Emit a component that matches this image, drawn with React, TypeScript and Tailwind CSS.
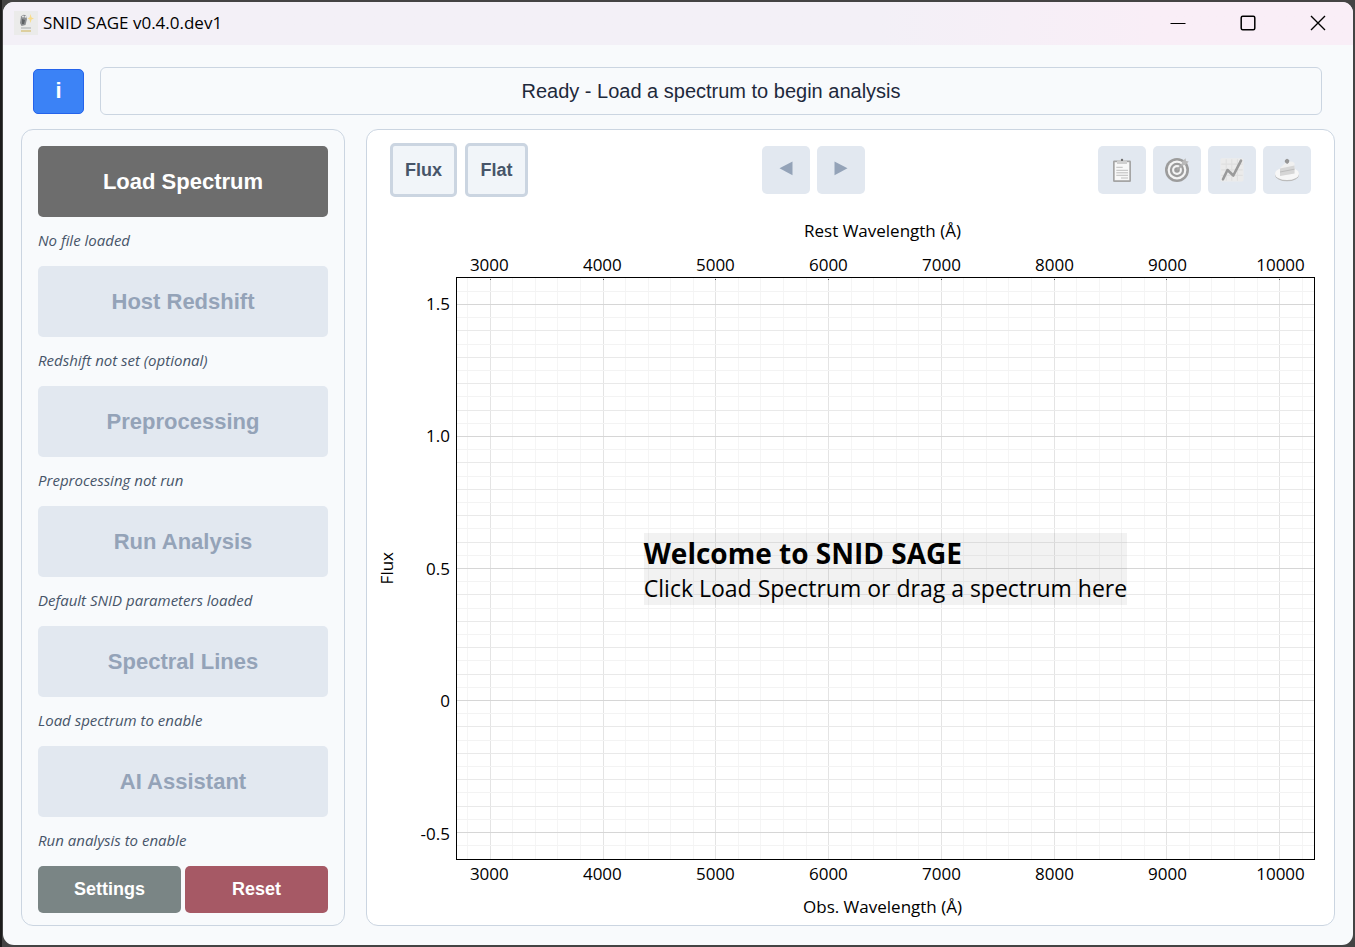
import React from "react";

const steps = [
  { label: "Load Spectrum", note: "No file loaded", enabled: true },
  { label: "Host Redshift", note: "Redshift not set (optional)", enabled: false },
  { label: "Preprocessing", note: "Preprocessing not run", enabled: false },
  { label: "Run Analysis", note: "Default SNID parameters loaded", enabled: false },
  { label: "Spectral Lines", note: "Load spectrum to enable", enabled: false },
  { label: "AI Assistant", note: "Run analysis to enable", enabled: false },
];

const X_MIN = 2705;
const X_MAX = 10305;
const Y_MIN = -0.6;
const Y_MAX = 1.6;

const xTicks = [3000, 4000, 5000, 6000, 7000, 8000, 9000, 10000];
const yTicks = [
  { value: 1.5, label: "1.5" },
  { value: 1, label: "1.0" },
  { value: 0.5, label: "0.5" },
  { value: 0, label: "0" },
  { value: -0.5, label: "-0.5" },
];

const xPct = (v: number) => `${((v - X_MIN) / (X_MAX - X_MIN)) * 100}%`;
const yPct = (v: number) => `${((Y_MAX - v) / (Y_MAX - Y_MIN)) * 100}%`;

const xLines = Array.from({ length: 38 }, (_, i) => 2800 + i * 200);
// Horizontal grid positions in hundredths, one every 0.05
const yLines = Array.from({ length: 43 }, (_, i) => -55 + i * 5);

function yStroke(v: number) {
  if (v % 50 === 0) return "#d6d6d6";
  if (v % 10 === 0) return "#e9e9e9";
  return "#f3f3f3";
}

function AppIcon() {
  return (
    <svg width="24" height="24" viewBox="0 0 24 24" aria-hidden="true">
      <rect width="24" height="24" fill="#ebebea" />
      <path d="M7 5.5Q9 2.5 12 4.5L13 8L11.5 14L7.5 15L6 12Z" fill="#8c8f92" />
      <path d="M8 8L11 9L10 13L8 13Z" fill="#5f6265" />
      <circle cx="9" cy="5.5" r="1" fill="#e8e8e8" />
      <circle cx="11.5" cy="5.7" r="1" fill="#e8e8e8" />
      <path d="M16.5 3L17.5 6.5L20 7.5L17.5 8.5L16.5 12L15.5 8.5L13.5 7.5L15.5 6.5Z" fill="#f8dc8c" />
      <path d="M7 16H17V18H7Z" fill="#c9cbcc" />
      <path d="M7 19H17V21H7Z" fill="#ddcf9f" />
    </svg>
  );
}

function ClipboardIcon() {
  return (
    <svg width="24" height="24" viewBox="0 0 24 24" aria-hidden="true">
      <rect x="3" y="2.5" width="18" height="21.5" rx="1.2" fill="#a5a5a5" />
      <rect x="4.7" y="4.2" width="14.6" height="18" fill="#f8f8f8" />
      <path d="M7 6V3.2Q7 2.4 8 2.4H10.3L12 .6L13.7 2.4H16Q17 2.4 17 3.2V6Z" fill="#cfcfcf" />
      <circle cx="12" cy="1.9" r="1.2" fill="#6f6f6f" />
      <path d="M6.3 9.3H12.7M6.3 12.3H18M6.3 14.8H18M6.3 17.3H18M11 20H18" stroke="#bdbdbd" strokeWidth="1" />
    </svg>
  );
}

function TargetIcon() {
  return (
    <svg width="24" height="24" viewBox="0 0 24 24" aria-hidden="true">
      <circle cx="12" cy="12" r="12" fill="#9c9c9c" />
      <circle cx="12" cy="12" r="9.4" fill="#f4f4f4" />
      <circle cx="12" cy="12" r="7.2" fill="#9c9c9c" />
      <circle cx="12" cy="12" r="4.9" fill="#f4f4f4" />
      <circle cx="12" cy="12" r="2.8" fill="#9c9c9c" />
      <path d="M12 12L19 5" stroke="#a9a9a9" strokeWidth="1.8" />
      <path d="M16.5 7.5L17 3.8L20.6 .2L21 3L23.8 3.4L20.2 7Z" fill="#b9b9b9" />
    </svg>
  );
}

function ChartIcon() {
  return (
    <svg width="24" height="24" viewBox="0 0 24 24" aria-hidden="true">
      <rect x="0.3" y="0.3" width="23.2" height="23.2" rx="1.5" fill="#ebebeb" />
      <path d="M1.2 6.2H22.7M1.2 11.8H22.7M1.2 17.4H22.7M6.2 1.2V22.7M11.8 1.2V22.7M17.4 1.2V22.7" stroke="#e0e0e0" strokeWidth="1.2" />
      <path d="M3 21.3L7.5 12L13.3 17.5L21 2.7" fill="none" stroke="#9a9a9a" strokeWidth="2.6" strokeLinecap="round" strokeLinejoin="round" />
    </svg>
  );
}

function CakeIcon() {
  return (
    <svg width="24" height="24" viewBox="0 0 24 24" aria-hidden="true">
      <ellipse cx="12" cy="16.8" rx="12" ry="6.5" fill="#bcbcbc" />
      <ellipse cx="12" cy="15.8" rx="12" ry="6.3" fill="#f7f7f7" />
      <path d="M5 10L11 4.5Q16 2.5 19.5 5V15.5L5 18Z" fill="#f0f0f0" />
      <path d="M5 10.5L19.5 7.5V15.5L5 18Z" fill="#d6d6d6" />
      <path d="M5 14L19.5 11.2" stroke="#bdbdbd" strokeWidth="1" />
      <path d="M10 2.2Q12 -.8 14.2 2.2Q14.8 4.6 12.2 6Q9.2 4.8 10 2.2Z" fill="#969696" />
    </svg>
  );
}

const tools = [
  { name: "Show results", Icon: ClipboardIcon },
  { name: "Best match", Icon: TargetIcon },
  { name: "Show plots", Icon: ChartIcon },
  { name: "Composition", Icon: CakeIcon },
];

const toolButton =
  "flex h-12 w-12 items-center justify-center rounded-[5px] bg-[#e2e8f0] text-[#94a3b8]";

function XTickRow() {
  return (
    <div className="relative mr-[19px] ml-[89px] h-6 text-[17px] leading-6">
      {xTicks.map((t) => (
        <span key={t} className="absolute -translate-x-1/2" style={{ left: xPct(t) }}>
          {t}
        </span>
      ))}
    </div>
  );
}

function TitleBar() {
  return (
    <header className="flex h-[43px] items-center bg-linear-to-r from-[#f3f0f7] from-65% to-[#f9eef7] to-85% pb-[2px] pl-[11px]">
      <AppIcon />
      <h1 className="ml-[5px] grow text-[17px] leading-6 text-black">SNID SAGE v0.4.0.dev1</h1>
      <button aria-label="Minimize" className="flex h-full w-[70px] items-center justify-center">
        <svg width="16" height="16" viewBox="0 0 16 16">
          <path d="M0.5 8.5H15.5" stroke="#000" />
        </svg>
      </button>
      <button aria-label="Maximize" className="flex h-full w-[70px] items-center justify-center">
        <svg width="16" height="16" viewBox="0 0 16 16">
          <rect x="1.2" y="1.2" width="13.6" height="13.6" rx="1.5" fill="none" stroke="#000" strokeWidth="1.5" />
        </svg>
      </button>
      <button aria-label="Close" className="flex h-full w-[70px] items-center justify-center">
        <svg width="16" height="16" viewBox="0 0 16 16">
          <path d="M1 1L15 15M15 1L1 15" stroke="#000" strokeWidth="1.4" />
        </svg>
      </button>
    </header>
  );
}

function Sidebar() {
  return (
    <aside className="flex w-[324px] shrink-0 flex-col rounded-[12px] border border-[#cbd5e1] px-4 pb-3 pt-4">
      {steps.map((s) => (
        <div key={s.label}>
          <button
            disabled={!s.enabled}
            className={
              s.enabled
                ? "block h-[71px] w-full rounded-[5px] bg-[#6d6d6d] font-['Liberation_Sans',sans-serif] text-[22px] font-bold text-white"
                : "block h-[71px] w-full rounded-[5px] bg-[#e2e8f0] font-['Liberation_Sans',sans-serif] text-[22px] font-bold text-[#94a3b8]"
            }
          >
            {s.label}
          </button>
          <p className="h-[49px] pt-[13px] text-[15px] leading-5 text-[#475569] italic">{s.note}</p>
        </div>
      ))}
      <div className="flex gap-1 font-['Liberation_Sans',sans-serif] text-[18px] font-bold text-white">
        <button className="h-[47px] flex-1 rounded-[5px] bg-[#7a8585]">Settings</button>
        <button className="h-[47px] flex-1 rounded-[5px] bg-[#a65965]">Reset</button>
      </div>
    </aside>
  );
}

function Plot() {
  return (
    <>
      <div className="mt-[22px] h-6 pr-5 pl-[84px] text-center text-[17px] leading-6">Rest Wavelength (Å)</div>
      <div className="h-[10px]" />
      <XTickRow />
      <div className="flex grow pr-[19px]">
        <div className="relative w-[89px] shrink-0">
          <div className="absolute inset-y-0 left-2 flex w-6 items-center justify-center text-[17px] leading-6">
            <span className="rotate-180 [writing-mode:vertical-rl]">Flux</span>
          </div>
          {yTicks.map((t) => (
            <span
              key={t.label}
              className="absolute right-[6px] -translate-y-1/2 text-[17px] leading-6"
              style={{ top: yPct(t.value) }}
            >
              {t.label}
            </span>
          ))}
        </div>
        <div className="relative grow border border-black">
          <svg className="absolute inset-0 h-full w-full" shapeRendering="crispEdges" aria-hidden="true">
            {xLines.map((v) => (
              <line key={v} x1={xPct(v)} x2={xPct(v)} y1="0" y2="100%" stroke={v % 1000 === 0 ? "#e4e4e4" : "#f5f5f5"} />
            ))}
            {yLines.map((v) => (
              <line key={v} x1="0" x2="100%" y1={yPct(v / 100)} y2={yPct(v / 100)} stroke={yStroke(v)} />
            ))}
            {xTicks.map((v) => (
              <line key={v} x1={xPct(v)} x2={xPct(v)} y1="1" y2="2" stroke="#555" />
            ))}
          </svg>
          <div className="absolute inset-0 flex items-center justify-center">
            <div className="bg-black/5 pt-[2px] whitespace-nowrap text-black">
              <h2 className="text-[28px] leading-9 font-bold">Welcome to SNID SAGE</h2>
              <p className="text-[23px] leading-[34px]">Click Load Spectrum or drag a spectrum here</p>
            </div>
          </div>
        </div>
      </div>
      <div className="h-[2px]" />
      <XTickRow />
      <div className="mt-[9px] h-6 pr-5 pl-[84px] text-center text-[17px] leading-6">Obs. Wavelength (Å)</div>
    </>
  );
}

export default function App() {
  return (
    <div className="flex min-h-screen flex-col border-l-2 border-[#1c1c1c] bg-[#444444] pt-[2px] pr-[2px] pb-[2px] pl-px font-['Open_Sans','Noto_Sans',sans-serif] text-black">
      <div className="flex grow flex-col overflow-hidden rounded-[11px] bg-[#f8fafc]">
        <TitleBar />
        <main className="flex grow flex-col px-[18px] pt-[22px] pb-[19px]">
          <div className="flex items-center gap-4 pr-[13px] pl-3">
            <button
              aria-label="Information"
              className="h-[45px] w-[51px] rounded-[5px] border border-[#2563eb] bg-[#3b82f6] font-['Liberation_Sans',sans-serif] text-[22px] leading-6 font-bold text-white"
            >
              i
            </button>
            <div
              role="status"
              className="flex h-12 grow items-center justify-center rounded-[6px] border border-[#cbd5e1] font-['Liberation_Sans',sans-serif] text-[20px] text-[#1e293b]"
            >
              Ready - Load a spectrum to begin analysis
            </div>
          </div>
          <div className="mt-[14px] flex grow gap-[21px]">
            <Sidebar />
            <section className="flex grow flex-col rounded-[12px] border border-[#cbd5e1] bg-white pt-[13px] pb-[6px]">
              <div className="flex items-center justify-between px-[23px]">
                <div className="flex gap-2 font-['Liberation_Sans',sans-serif] text-[18px] font-bold text-[#475569]">
                  <button className="h-[54px] w-[67px] rounded-[5px] border-3 border-[#cbd5e1] bg-[#f1f5f9]">Flux</button>
                  <button className="h-[54px] w-[63px] rounded-[5px] border-3 border-[#cbd5e1] bg-[#f1f5f9]">Flat</button>
                </div>
                <div className="flex gap-[7px]">
                  <button disabled aria-label="Previous template" className={toolButton}>
                    <svg width="14" height="18" viewBox="0 0 14 18" fill="currentColor">
                      <path d="M0.5 7.3L13.5 0.4V14.2Z" />
                    </svg>
                  </button>
                  <button disabled aria-label="Next template" className={toolButton}>
                    <svg width="14" height="18" viewBox="0 0 14 18" fill="currentColor">
                      <path d="M13.5 7.3L0.5 0.4V14.2Z" />
                    </svg>
                  </button>
                </div>
                <div className="flex gap-[7px]">
                  {tools.map(({ name, Icon }) => (
                    <button key={name} disabled aria-label={name} className={toolButton}>
                      <Icon />
                    </button>
                  ))}
                </div>
              </div>
              <Plot />
            </section>
          </div>
        </main>
      </div>
    </div>
  );
}
